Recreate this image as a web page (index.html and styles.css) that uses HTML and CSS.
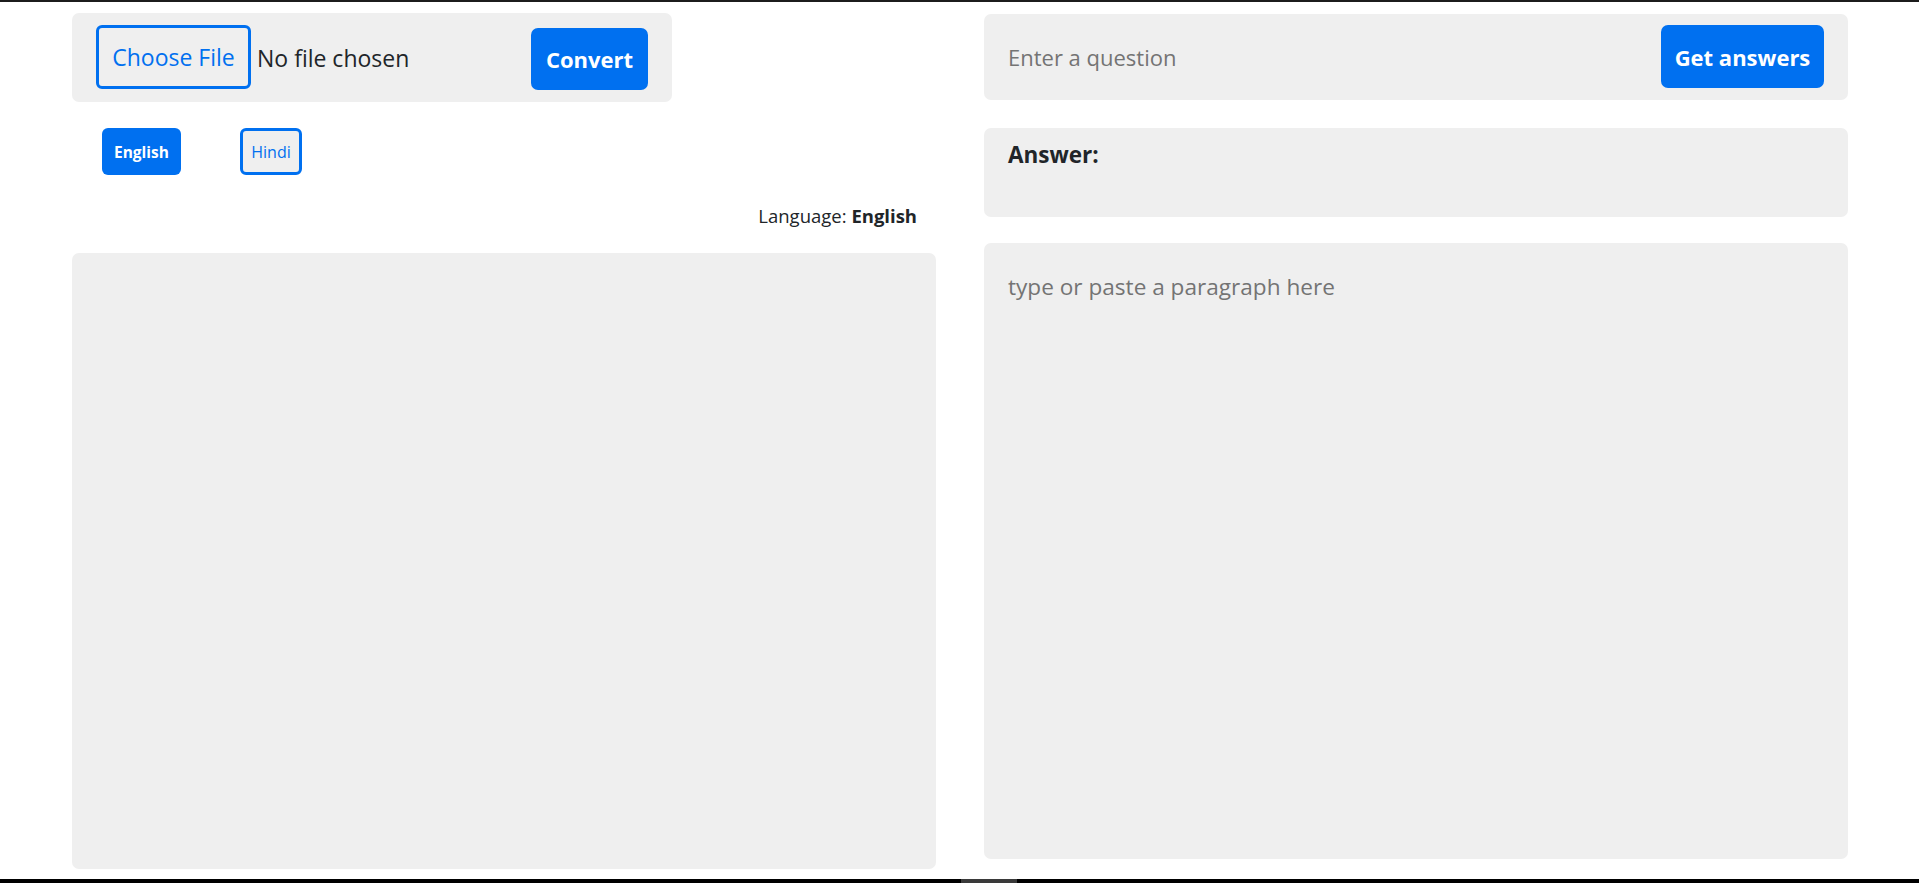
FILE: index.html
```html
<!DOCTYPE html>
<html lang="en">
<head>
<meta charset="utf-8">
<title>Paragraph Q&amp;A</title>
<link rel="stylesheet" href="styles.css">
</head>
<body>
<div class="frame-top"></div>
<main class="page">
  <section class="col col-left">
    <form class="upload-panel">
      <div class="file-field">
        <span class="file-btn">Choose File</span>
        <span class="file-name">No file chosen</span>
      </div>
      <button type="button" class="btn btn-primary btn-lg">Convert</button>
    </form>
    <div class="lang-buttons">
      <button type="button" class="lang-btn lang-active">English</button>
      <button type="button" class="lang-btn lang-outline">Hindi</button>
    </div>
    <p class="lang-status">Language: <strong>English</strong></p>
    <div class="output-box"></div>
  </section>
  <section class="col col-right">
    <form class="question-panel">
      <input class="question-input" type="text" placeholder="Enter a question">
      <button type="button" class="btn btn-primary btn-lg">Get answers</button>
    </form>
    <div class="answer-box">
      <h4 class="answer-title">Answer:</h4>
    </div>
    <textarea class="paragraph" placeholder="type or paste a paragraph here"></textarea>
  </section>
</main>
<div class="frame-bottom"><span class="frame-thumb"></span></div>
</body>
</html>
```
FILE: styles.css
```css
html, body {
  margin: 0;
  padding: 0;
  height: 100%;
}

body {
  display: flex;
  flex-direction: column;
  background: #ffffff;
  color: #212529;
  font-family: "Open Sans", "Noto Sans", sans-serif;
  overflow: hidden;
}

.frame-top {
  height: 2px;
  background: #1c1c1c;
  flex: none;
}

.page {
  flex: 1;
  display: grid;
  grid-template-columns: 864px 864px;
  column-gap: 48px;
  padding: 11px 0 0 72px;
  align-items: start;
}

.col {
  display: flex;
  flex-direction: column;
}

/* left column */
.upload-panel {
  width: 600px;
  height: 89px;
  box-sizing: border-box;
  background: #efefef;
  border-radius: 7px;
  padding: 0 24px;
  display: flex;
  align-items: center;
  justify-content: space-between;
}

.file-field {
  display: flex;
  align-items: center;
  gap: 6px;
}

.file-btn {
  box-sizing: border-box;
  height: 64px;
  width: 155px;
  border: 3px solid #0070f0;
  border-radius: 6px;
  color: #0070f0;
  font-size: 23px;
  display: flex;
  align-items: center;
  justify-content: center;
  margin-top: -2px;
}

.file-name {
  font-size: 23px;
  color: #212529;
}

.btn {
  font-family: inherit;
  border: none;
  cursor: pointer;
  white-space: nowrap;
}

.btn-primary {
  background: #0070f0;
  color: #ffffff;
  font-weight: 700;
  border-radius: 7px;
}

.btn-lg {
  height: 62px;
  font-size: 22px;
  padding: 0;
}

.upload-panel .btn-lg {
  width: 117px;
  margin-top: 2px;
}

.lang-buttons {
  display: flex;
  gap: 59px;
  padding-left: 30px;
  margin-top: 26px;
}

.lang-btn {
  box-sizing: border-box;
  height: 47px;
  font-family: inherit;
  border-radius: 6px;
  cursor: pointer;
  padding: 0;
}

.lang-active {
  width: 79px;
  background: #0070f0;
  border: none;
  color: #ffffff;
  font-weight: 700;
  font-size: 15.5px;
}

.lang-outline {
  width: 62px;
  background: #efefef;
  border: 3px solid #0070f0;
  color: #0070f0;
  font-size: 16px;
}

.lang-status {
  margin: 28px 0 0;
  padding-right: 19px;
  text-align: right;
  font-size: 18.5px;
  line-height: 25px;
}

.lang-status strong {
  font-weight: 700;
}

.output-box {
  margin-top: 25px;
  height: 616px;
  background: #efefef;
  border-radius: 7px;
}

/* right column */
.question-panel {
  margin-top: 1px;
  height: 86px;
  box-sizing: border-box;
  background: #efefef;
  border-radius: 7px;
  padding: 0 24px;
  display: flex;
  align-items: center;
  justify-content: space-between;
}

.question-input {
  flex: 1;
  border: none;
  background: transparent;
  font-family: inherit;
  font-size: 22px;
  color: #212529;
  padding: 0;
  outline: none;
}

.question-input::placeholder {
  color: #747474;
}

.question-panel .btn-lg {
  width: 163px;
  height: 63px;
  margin-top: -1px;
  margin-left: 16px;
}

.answer-box {
  margin-top: 28px;
  height: 89px;
  box-sizing: border-box;
  background: #efefef;
  border-radius: 7px;
  padding: 12px 24px 0;
}

.answer-title {
  margin: 0;
  font-size: 22.5px;
  line-height: 30px;
  font-weight: 700;
  color: #212529;
}

.paragraph {
  display: block;
  margin-top: 26px;
  height: 616px;
  box-sizing: border-box;
  width: 100%;
  border: none;
  border-radius: 7px;
  background: #efefef;
  padding: 28px 24px 24px;
  font-family: inherit;
  font-size: 22.6px;
  line-height: 32px;
  resize: none;
  outline: none;
  color: #212529;
}

.paragraph::placeholder {
  color: #747474;
}

.frame-bottom {
  flex: none;
  height: 4px;
  background: #000000;
  padding-left: 961px;
}

.frame-thumb {
  display: block;
  width: 56px;
  height: 4px;
  background: #3a3a3a;
}
```
